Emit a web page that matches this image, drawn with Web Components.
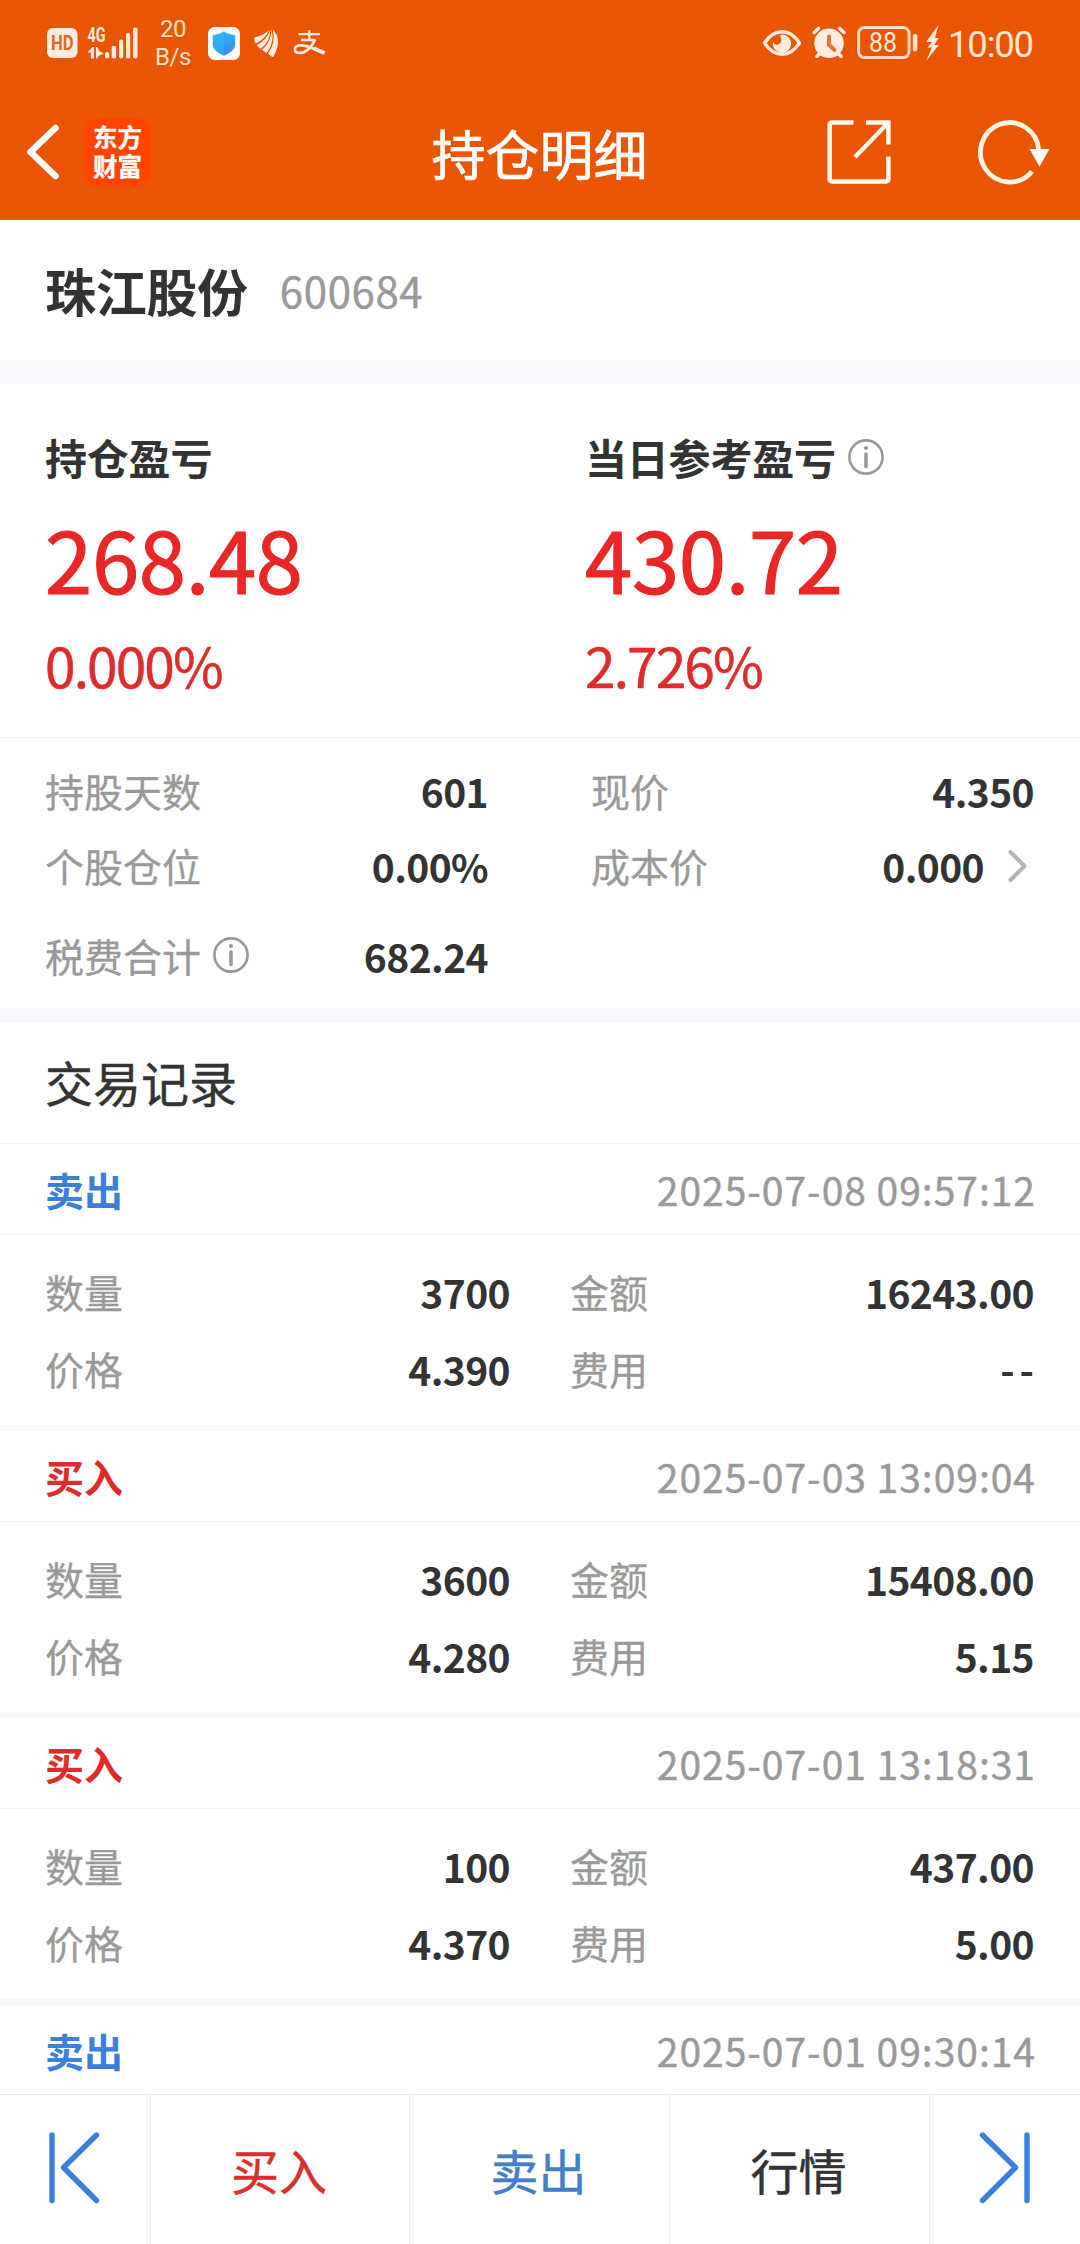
<!DOCTYPE html>
<html lang="zh-CN">
<head>
<meta charset="utf-8">
<title>持仓明细</title>
<style>
html,body{margin:0;padding:0;background:#fff}
body{font-family:"Noto Sans CJK SC",sans-serif;color:#333;width:1080px;height:2244px;overflow:hidden}
</style>
</head>
<body>
<position-page></position-page>
<script>
const define = (name, html, setup) => {
  const t = document.createElement('template');
  t.innerHTML = html;
  customElements.define(name, class extends HTMLElement {
    constructor() {
      super();
      this.attachShadow({mode: 'open'}).appendChild(t.content.cloneNode(true));
    }
    connectedCallback() { if (setup) setup(this, this.shadowRoot); }
  });
};

define('status-bar', `
<style>
:host{display:flex;height:86px;align-items:center;color:#ffeadb;font-family:Roboto,sans-serif;padding:0 48px 0 47px;box-sizing:border-box}
svg{display:block;flex:none;overflow:visible}
.rate{width:44px;margin-left:12px;text-align:center;font-size:24px;line-height:28px;font-weight:400;color:#ffe0c6;letter-spacing:-.4px}
.sp{flex:1}
.clock{font-size:36.5px;line-height:44px;letter-spacing:-1.2px;margin-left:8px;font-weight:400;padding-top:3px;color:#ffe6d2;width:84px;white-space:nowrap}
</style>
<svg width="31" height="32" viewBox="0 0 31 32"><rect y="1" width="30.5" height="30" rx="6" fill="#ffece0"/><text x="4" y="23" font-family="Roboto" font-weight="700" font-size="20" fill="#d86a2c" textLength="22.500" lengthAdjust="spacingAndGlyphs">HD</text></svg>
<svg width="51" height="34" viewBox="88 25 51 34" style="margin-left:10px" fill="#ffeadb"><text x="87.5" y="41.2" font-family="Roboto" font-weight="700" font-size="21" textLength="18" lengthAdjust="spacingAndGlyphs">4G</text>
<path d="M87.500 51.500 92.500 46h1.500v11.500h-3.200v-6zM96 46h1.500l1.200 3.500 4.800 3-5 2.500-1 2.500H96z"/><rect x="105" y="51" width="4.200" height="6.500" rx="2"/><rect x="111.700" y="44.700" width="4.400" height="12.800" rx="2"/><rect x="119" y="38.500" width="4.200" height="19" rx="2"/><rect x="126" y="32" width="4.200" height="25.500" rx="2"/><rect x="133" y="26.500" width="4.600" height="31" rx="2"/></svg>
<div class="rate">20<br>B/s</div>
<svg width="32" height="33" viewBox="0 0 32 33" style="margin-left:13px"><defs><linearGradient id="g" x1="0" y1="0" x2="0" y2="1"><stop offset="0" stop-color="#2fb3f3"/><stop offset="1" stop-color="#3c84f5"/></linearGradient></defs><rect width="32" height="33" rx="6.500" fill="#fff"/><path d="M16 4.200Q21 8 27.200 8v9.500Q27 24 16 28.800 5 24 4.800 17.500V8Q11 8 16 4.200z" fill="url(#g)"/><path d="M16 4.200Q11 8 4.800 8v9.500Q5 24 16 28.800z" fill="#34bdf8" opacity=".45"/></svg>
<svg width="26" height="30" viewBox="253 28 26 30" style="margin-left:13px" fill="#ffeadb"><path d="M254.200 37.500Q262 36 268.800 30.500 264.500 39.500 255.800 43.500 254 41 254.200 37.500z"/><path d="M256.800 45.200Q266.500 40 270.300 29.700 270.500 41.500 260.800 48.800 258.500 47.500 256.800 45.200z"/><path d="M262 49.800Q271.500 42 271.500 29.300 275 43 266.500 53 264.500 51.800 262 49.800z"/><path d="M272.800 29.200Q278.500 35 278 43 277.300 50.500 273 57.200 270.500 56.500 268 53.600 276 43 272.800 29.200z"/></svg>
<svg width="33" height="28" viewBox="293 30 33 28" style="margin-left:14px" fill="none" stroke="#ffeadb"><path d="M298.500 35.200H320M309.300 31v10M301 41h14.500" stroke-width="2.300"/><path d="M315 40.500C311.500 49.500 305 54 299.500 54c-6 0-6-6.500-.7-7.500 8-1.400 15.500 4 25.700 7.500" stroke-width="2.600"/><path d="M314 49.500 324.500 54" stroke-width="4"/></svg>
<span class="sp"></span>
<svg width="40" height="28" viewBox="764 28 40 28"><path d="M766.500 42Q774 30.800 784 30.800T801.500 42Q794 53.300 784 53.300T766.500 42z" fill="none" stroke="#ffeadb" stroke-width="3.400" stroke-linejoin="round"/><path d="M784 33.500a9.200 9.200 0 1 1-9 7q1.500 3.800 5 3 5.500-1.600 2-9z" fill="#ffeadb"/></svg>
<svg width="35" height="34" viewBox="814 26 35 34" style="margin-left:10px"><circle cx="831" cy="43.200" r="14.800" fill="#ffece0"/><g stroke="#ffece0" stroke-width="3.600" stroke-linecap="round"><path d="M816.200 32.500l4.300-4M846 32.500l-4.300-4M819 56.200l3-3M843 56.200l-3-3"/></g><path d="M831 36.500v8.300l5.500 5.200" fill="none" stroke="#e8722e" stroke-width="4" stroke-linecap="round"/></svg>
<svg width="62" height="34" viewBox="859 26 62 34" style="margin-left:10px"><rect x="860.600" y="27.600" width="50.500" height="30" rx="6" fill="none" stroke="#ffd9bd" stroke-width="3"/><rect x="914.800" y="34" width="4.600" height="17.500" rx="2.300" fill="#ffe2cd"/><text x="885" y="52.300" text-anchor="middle" font-family="Roboto" font-size="27.500" fill="#ffeadb" textLength="28" lengthAdjust="spacingAndGlyphs">88</text></svg>
<svg width="14" height="36" viewBox="0 0 14 36" style="margin-left:7px" fill="#ffeadb"><path d="M12.500 0 0 17h6L1.500 22.500h4.300L.5 35.500 13 20H8.200l4.500-7H9z"/></svg>
<div class="clock">10:00</div>`);

define('nav-bar', `
<style>
:host{display:flex;height:134px;align-items:center;color:#fff;box-sizing:border-box;padding:0 30px 0 26px}
.l,.r{display:flex;align-items:center;flex:1;margin-top:-2px}
.r{justify-content:flex-end}
svg{display:block;flex:none}
.logo{width:67px;height:69px;border-radius:15px;background:#ff4400;margin-left:24px;font-size:24.500px;line-height:29px;font-weight:700;text-align:center;box-sizing:border-box;padding-top:4px;-webkit-text-stroke:.3px #fff}
.t{font-size:54px;line-height:80px;white-space:nowrap;font-weight:400;-webkit-text-stroke:.7px #fff;padding-left:3px}
</style>
<div class="l"><svg width="34" height="56" viewBox="0 0 34 56"><path d="M29.500 4 4.500 28l25 24" fill="none" stroke="#fff" stroke-width="6.500" stroke-linecap="round" stroke-linejoin="round"/></svg><div class="logo">东方<br>财富</div></div>
<div class="t"><slot></slot></div>
<div class="r">
<svg width="65" height="64" viewBox="0 0 65 64" fill="none" stroke="#fff8ea" stroke-width="4.500"><path d="M26.500 2.600H5q-2.400 0-2.400 2.400v54q0 2.400 2.400 2.400h54q2.400 0 2.400-2.400V36.500M39 2.600h22.400v22M61 3 28 37"/></svg>
<svg width="72" height="66" viewBox="979 119 72 66" style="margin-left:86px"><path d="M1039.800 150A29.200 29.700 0 1 0 1033 171.500" fill="none" stroke="#fff3e2" stroke-width="4.800"/><path d="M1030.500 149h20l-10 17.500z" fill="#fff"/></svg>
</div>`);

define('info-icon', `
<style>:host{display:block;flex:none}svg{display:block}</style>
<svg width="36" height="36" viewBox="0 0 36 36"><circle cx="18" cy="18" r="16.600" fill="none" stroke="#999" stroke-width="2.600"/><circle cx="18" cy="9" r="2.100" fill="#999"/><path d="M18 15v12.500" stroke="#999" stroke-width="3.600" stroke-linecap="round"/></svg>`);

define('section-gap', `<style>:host{display:block;flex:none;background:#f6f7fa}</style>`);

define('stock-title', `
<style>
:host{display:flex;flex:none;height:140px;padding-left:45px;align-items:center;line-height:80px;white-space:nowrap}
b{font-size:51px;letter-spacing:-.3px}
span{font-size:42px;color:#999;margin-left:32px;letter-spacing:.6px;-webkit-text-stroke:.4px #999}
</style><b><slot></slot></b><span></span>`, (el, r) => r.querySelector('span').textContent = el.getAttribute('code'));

define('profit-figure', `
<style>
:host{display:block;width:540px;flex:none;white-space:nowrap;color:#e92727}
.h{display:flex;align-items:center;gap:12px;height:60px;font-size:42px;line-height:60px;font-weight:700;color:#333;letter-spacing:-.2px;margin-left:-1px}
.v{font-size:85px;line-height:100px;margin-top:20px;margin-left:-1px;-webkit-text-stroke:1.2px #e92727;letter-spacing:-.3px}
.p{font-size:55px;line-height:60px;margin-top:27px;letter-spacing:-1.9px;margin-left:-1px;color:#de2c2c;-webkit-text-stroke:.5px #de2c2c}
</style>
<div class="h"><slot></slot></div><div class="v"></div><div class="p"></div>`, (el, r) => {
  r.querySelector('.v').textContent = el.getAttribute('value');
  r.querySelector('.p').textContent = el.getAttribute('percent');
});

define('stat-item', `
<style>
:host{display:flex;align-items:center;justify-content:space-between;font-size:39px;line-height:60px;white-space:nowrap}
.k{display:flex;align-items:center;gap:12px;color:#999;margin:-1px 0 0 -1px;-webkit-text-stroke:.3px #999}
.e{display:flex;align-items:center}
b{letter-spacing:-.6px}
b.dash{letter-spacing:5px;margin-right:-5px;transform:translateY(-1px)}
</style>
<div class="k"><slot></slot></div><div class="e"><b></b><slot name="after"></slot></div>`, (el, r) => {
  const b = r.querySelector('b');
  b.textContent = el.getAttribute('value');
  b.classList.toggle('dash', b.textContent === '--');
});

define('trade-record', `
<style>
:host{display:block;flex:none;font-size:39px}
.h{display:flex;height:90px;align-items:center;justify-content:space-between;padding:0 44px 0 45px;border-bottom:1px solid #f5f6f7;line-height:60px}
.h b{color:#e02b2b}
:host([side="卖出"]) .h b{color:#3a80d9}
time{color:#999;letter-spacing:.98px;white-space:nowrap;-webkit-text-stroke:.4px #999}
.g{display:grid;grid-template-columns:464px 463px;column-gap:61px;grid-auto-rows:77px;padding:18px 46px;height:154px}
.bar{height:6px;background:#f6f8fa}
</style>
<div class="h"><b></b><time></time></div>`, (el, r) => {
  const a = n => el.getAttribute(n);
  r.querySelector('b').textContent = a('side');
  r.querySelector('time').textContent = a('time');
  if (!el.hasAttribute('qty') || r.querySelector('.g')) return;
  const g = document.createElement('div');
  g.className = 'g';
  [['数量', 'qty'], ['金额', 'amount'], ['价格', 'price'], ['费用', 'fee']].forEach(([k, n]) => {
    const s = document.createElement('stat-item');
    s.textContent = k;
    s.setAttribute('value', a(n));
    g.appendChild(s);
  });
  const bar = document.createElement('div');
  bar.className = 'bar';
  r.append(g, bar);
});

define('bottom-bar', `
<style>
:host{display:grid;grid-template-columns:150px 258px 259px 259px 150px;column-gap:1px;flex:none;height:149px;border-top:1px solid #ececec;background:#ececec}
div{background:#fff;display:flex;align-items:center;justify-content:center;font-size:48px;line-height:70px;box-sizing:border-box;padding:0 2px 2px 0;-webkit-text-stroke:.5px currentColor}
.buy{color:#d83030}.sell{color:#427fc8}
svg{display:block;margin-top:-2px;-webkit-text-stroke:0}
</style>
<div><svg width="52" height="74" viewBox="49 2131 52 74" fill="none" stroke="#3a80dc" stroke-width="5.400" stroke-linecap="round" stroke-linejoin="round"><path d="M53 2135v65.500M97.500 2135 64.500 2167.500 97.500 2200.500"/></svg></div>
<div class="buy">买入</div><div class="sell">卖出</div><div>行情</div>
<div style="padding-right:0"><svg width="52" height="74" viewBox="979 2131 52 74" fill="none" stroke="#3a80dc" stroke-width="5.400" stroke-linecap="round" stroke-linejoin="round"><path d="M1027 2135v65.500M982.500 2135 1015.500 2167.500 982.500 2200.500"/></svg></div>`);

define('position-page', `
<style>
:host{display:flex;flex-direction:column;width:1080px;height:2244px;background:#fff;overflow:hidden}
header{flex:none;height:220px;background:#ea5504}
main{flex:1;min-height:0;overflow:hidden;display:flex;flex-direction:column}
.pl{flex:none;display:flex;height:310px;padding:43px 0 0 46px;border-bottom:1px solid #f6f6f6}
.stats{flex:none;display:grid;grid-template-columns:442px 442px;column-gap:104px;grid-template-rows:75px 75px 105px;height:270px;padding:15px 46px 0;box-sizing:border-box}
h2{flex:none;margin:0;height:116px;line-height:116px;font-size:48px;font-weight:400;padding:0 0 4px 45px;border-bottom:1px solid #f5f6f7;-webkit-text-stroke:.4px #333}
</style>
<header><status-bar></status-bar><nav-bar>持仓明细</nav-bar></header>
<main>
<stock-title code="600684">珠江股份</stock-title>
<section-gap style="height:24px"></section-gap>
<div class="pl">
<profit-figure value="268.48" percent="0.000%">持仓盈亏</profit-figure>
<profit-figure value="430.72" percent="2.726%">当日参考盈亏<info-icon></info-icon></profit-figure>
</div>
<div class="stats">
<stat-item value="601">持股天数</stat-item><stat-item value="4.350">现价</stat-item>
<stat-item value="0.00%">个股仓位</stat-item><stat-item value="0.000">成本价<svg slot="after" width="50" height="34" viewBox="0 0 50 34" fill="none" stroke="#b3b3b3" stroke-width="4" stroke-linecap="round" stroke-linejoin="round"><path d="M26.500 3 40.500 17l-14 14"/></svg></stat-item>
<stat-item value="682.24">税费合计<info-icon></info-icon></stat-item>
</div>
<section-gap style="height:15px"></section-gap>
<h2>交易记录</h2>
<trade-record side="卖出" time="2025-07-08 09:57:12" qty="3700" amount="16243.00" price="4.390" fee="--"></trade-record>
<trade-record side="买入" time="2025-07-03 13:09:04" qty="3600" amount="15408.00" price="4.280" fee="5.15"></trade-record>
<trade-record side="买入" time="2025-07-01 13:18:31" qty="100" amount="437.00" price="4.370" fee="5.00"></trade-record>
<trade-record side="卖出" time="2025-07-01 09:30:14"></trade-record>
</main>
<bottom-bar></bottom-bar>`);
</script>
</body>
</html>
